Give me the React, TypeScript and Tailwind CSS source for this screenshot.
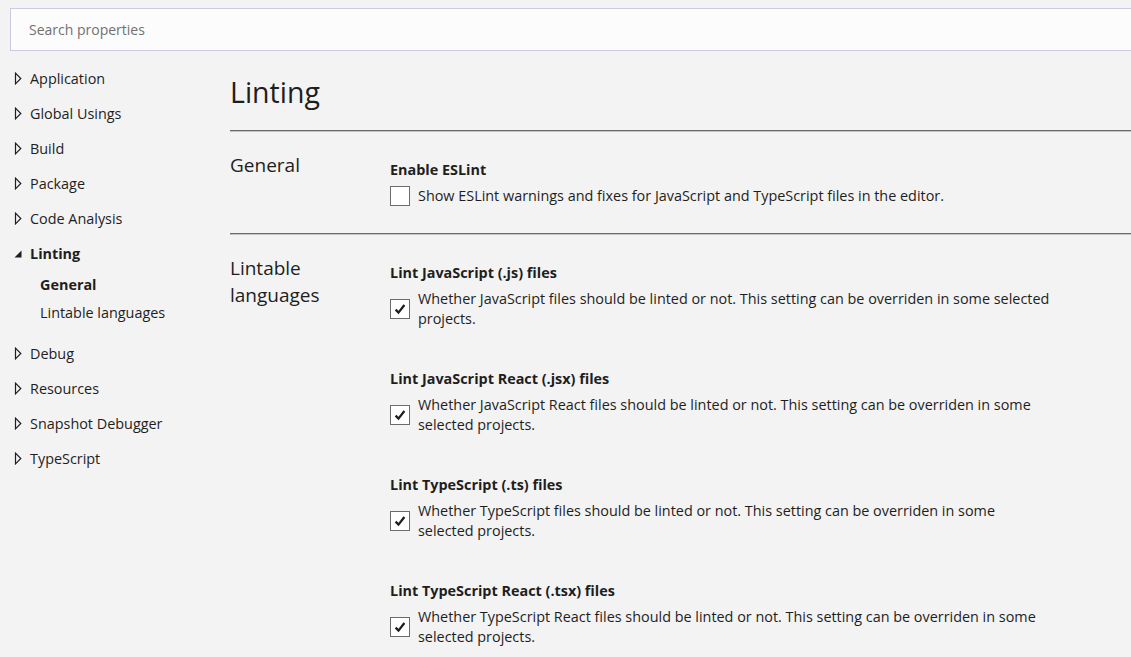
import React from 'react';

const navItems = [
  'Application',
  'Global Usings',
  'Build',
  'Package',
  'Code Analysis',
];

const navItemsAfter = ['Debug', 'Resources', 'Snapshot Debugger', 'TypeScript'];

const lintOptions = [
  {
    title: 'Lint JavaScript (.js) files',
    lines: [
      'Whether JavaScript files should be linted or not. This setting can be overriden in some selected',
      'projects.',
    ],
  },
  {
    title: 'Lint JavaScript React (.jsx) files',
    lines: [
      'Whether JavaScript React files should be linted or not. This setting can be overriden in some',
      'selected projects.',
    ],
  },
  {
    title: 'Lint TypeScript (.ts) files',
    lines: [
      'Whether TypeScript files should be linted or not. This setting can be overriden in some',
      'selected projects.',
    ],
  },
  {
    title: 'Lint TypeScript React (.tsx) files',
    lines: [
      'Whether TypeScript React files should be linted or not. This setting can be overriden in some',
      'selected projects.',
    ],
  },
];

const Collapsed = () => (
  <svg width="8" height="13" viewBox="0 0 8 13" className="shrink-0">
    <path d="M1.5 1.2 L6.8 6.5 L1.5 11.8 Z" fill="none" stroke="#1e1e1e" strokeWidth="1.2" />
  </svg>
);

const Expanded = () => (
  <svg width="8" height="13" viewBox="0 0 8 13" className="shrink-0">
    <path d="M0.5 10.5 L7.5 10.5 L7.5 3.5 Z" fill="#1e1e1e" />
  </svg>
);

const NavRow = ({ label }: { label: string }) => (
  <div className="h-[35px] flex items-center pl-[14px] gap-[8px]">
    <Collapsed />
    <span>{label}</span>
  </div>
);

const Checkbox = ({ checked }: { checked: boolean }) => (
  <div className="w-[20px] h-[20px] shrink-0 border border-[#6b6b6b] bg-white flex items-center justify-center">
    {checked && (
      <svg width="12" height="12" viewBox="0 0 12 12">
        <path d="M1.6 6.6 L4.5 9.6 L10.4 2" fill="none" stroke="#1e1e1e" strokeWidth="2.3" />
      </svg>
    )}
  </div>
);

const Divider = () => (
  <div className="h-[2px] border-t border-[#6b6b6b] border-b border-b-[#c4c4c4]" />
);

export default function App() {
  return (
    <div className="w-full h-[657px] overflow-hidden bg-[#f3f3f3] text-[#1e1e1e] font-['Open_Sans',sans-serif] text-[14.4px]">
      {/* Search */}
      <div className="pt-[8px] pl-[10px]">
        <div className="h-[43px] bg-[#fcfcfc] border border-r-0 border-[#cdc9e2] flex items-center pl-[18px] text-[14px] text-[#717171]">
          Search properties
        </div>
      </div>

      <div className="flex">
        {/* Sidebar */}
        <div className="w-[230px] shrink-0 pt-[10px]">
          {navItems.map(item => (
            <NavRow key={item} label={item} />
          ))}
          <div className="h-[35px] flex items-center pl-[14px] gap-[8px] font-bold">
            <Expanded />
            <span>Linting</span>
          </div>
          <div className="h-[28px] flex items-center pl-[40px] font-bold">General</div>
          <div className="h-[28px] flex items-center pl-[40px] mb-[9px]">Lintable languages</div>
          {navItemsAfter.map(item => (
            <NavRow key={item} label={item} />
          ))}
        </div>

        {/* Main */}
        <div className="flex-1">
          <div className="h-[79px] flex items-end pb-[18px]">
            <h1 className="text-[28.5px] leading-[40px]">Linting</h1>
          </div>
          <Divider />

          <div className="grid grid-cols-[160px_1fr] h-[101px]">
            <div className="pt-[20px] text-[19px] leading-[27px]">General</div>
            <div className="pt-[28px]">
              <div className="font-bold leading-[20px]">Enable ESLint</div>
              <div className="mt-[6px] flex items-center gap-[8px]">
                <Checkbox checked={false} />
                <span className="leading-[20px]">
                  Show ESLint warnings and fixes for JavaScript and TypeScript files in the editor.
                </span>
              </div>
            </div>
          </div>
          <Divider />

          <div className="grid grid-cols-[160px_1fr]">
            <div className="pt-[20px] text-[19px] leading-[27px]">
              Lintable
              <br />
              languages
            </div>
            <div className="pt-[28px] flex flex-col gap-[40px]">
              {lintOptions.map(opt => (
                <div key={opt.title}>
                  <div className="font-bold leading-[20px]">{opt.title}</div>
                  <div className="mt-[6px] flex items-center gap-[8px]">
                    <Checkbox checked />
                    <div className="leading-[20px] whitespace-nowrap">
                      {opt.lines.map(line => (
                        <div key={line}>{line}</div>
                      ))}
                    </div>
                  </div>
                </div>
              ))}
            </div>
          </div>
        </div>
      </div>
    </div>
  );
}
